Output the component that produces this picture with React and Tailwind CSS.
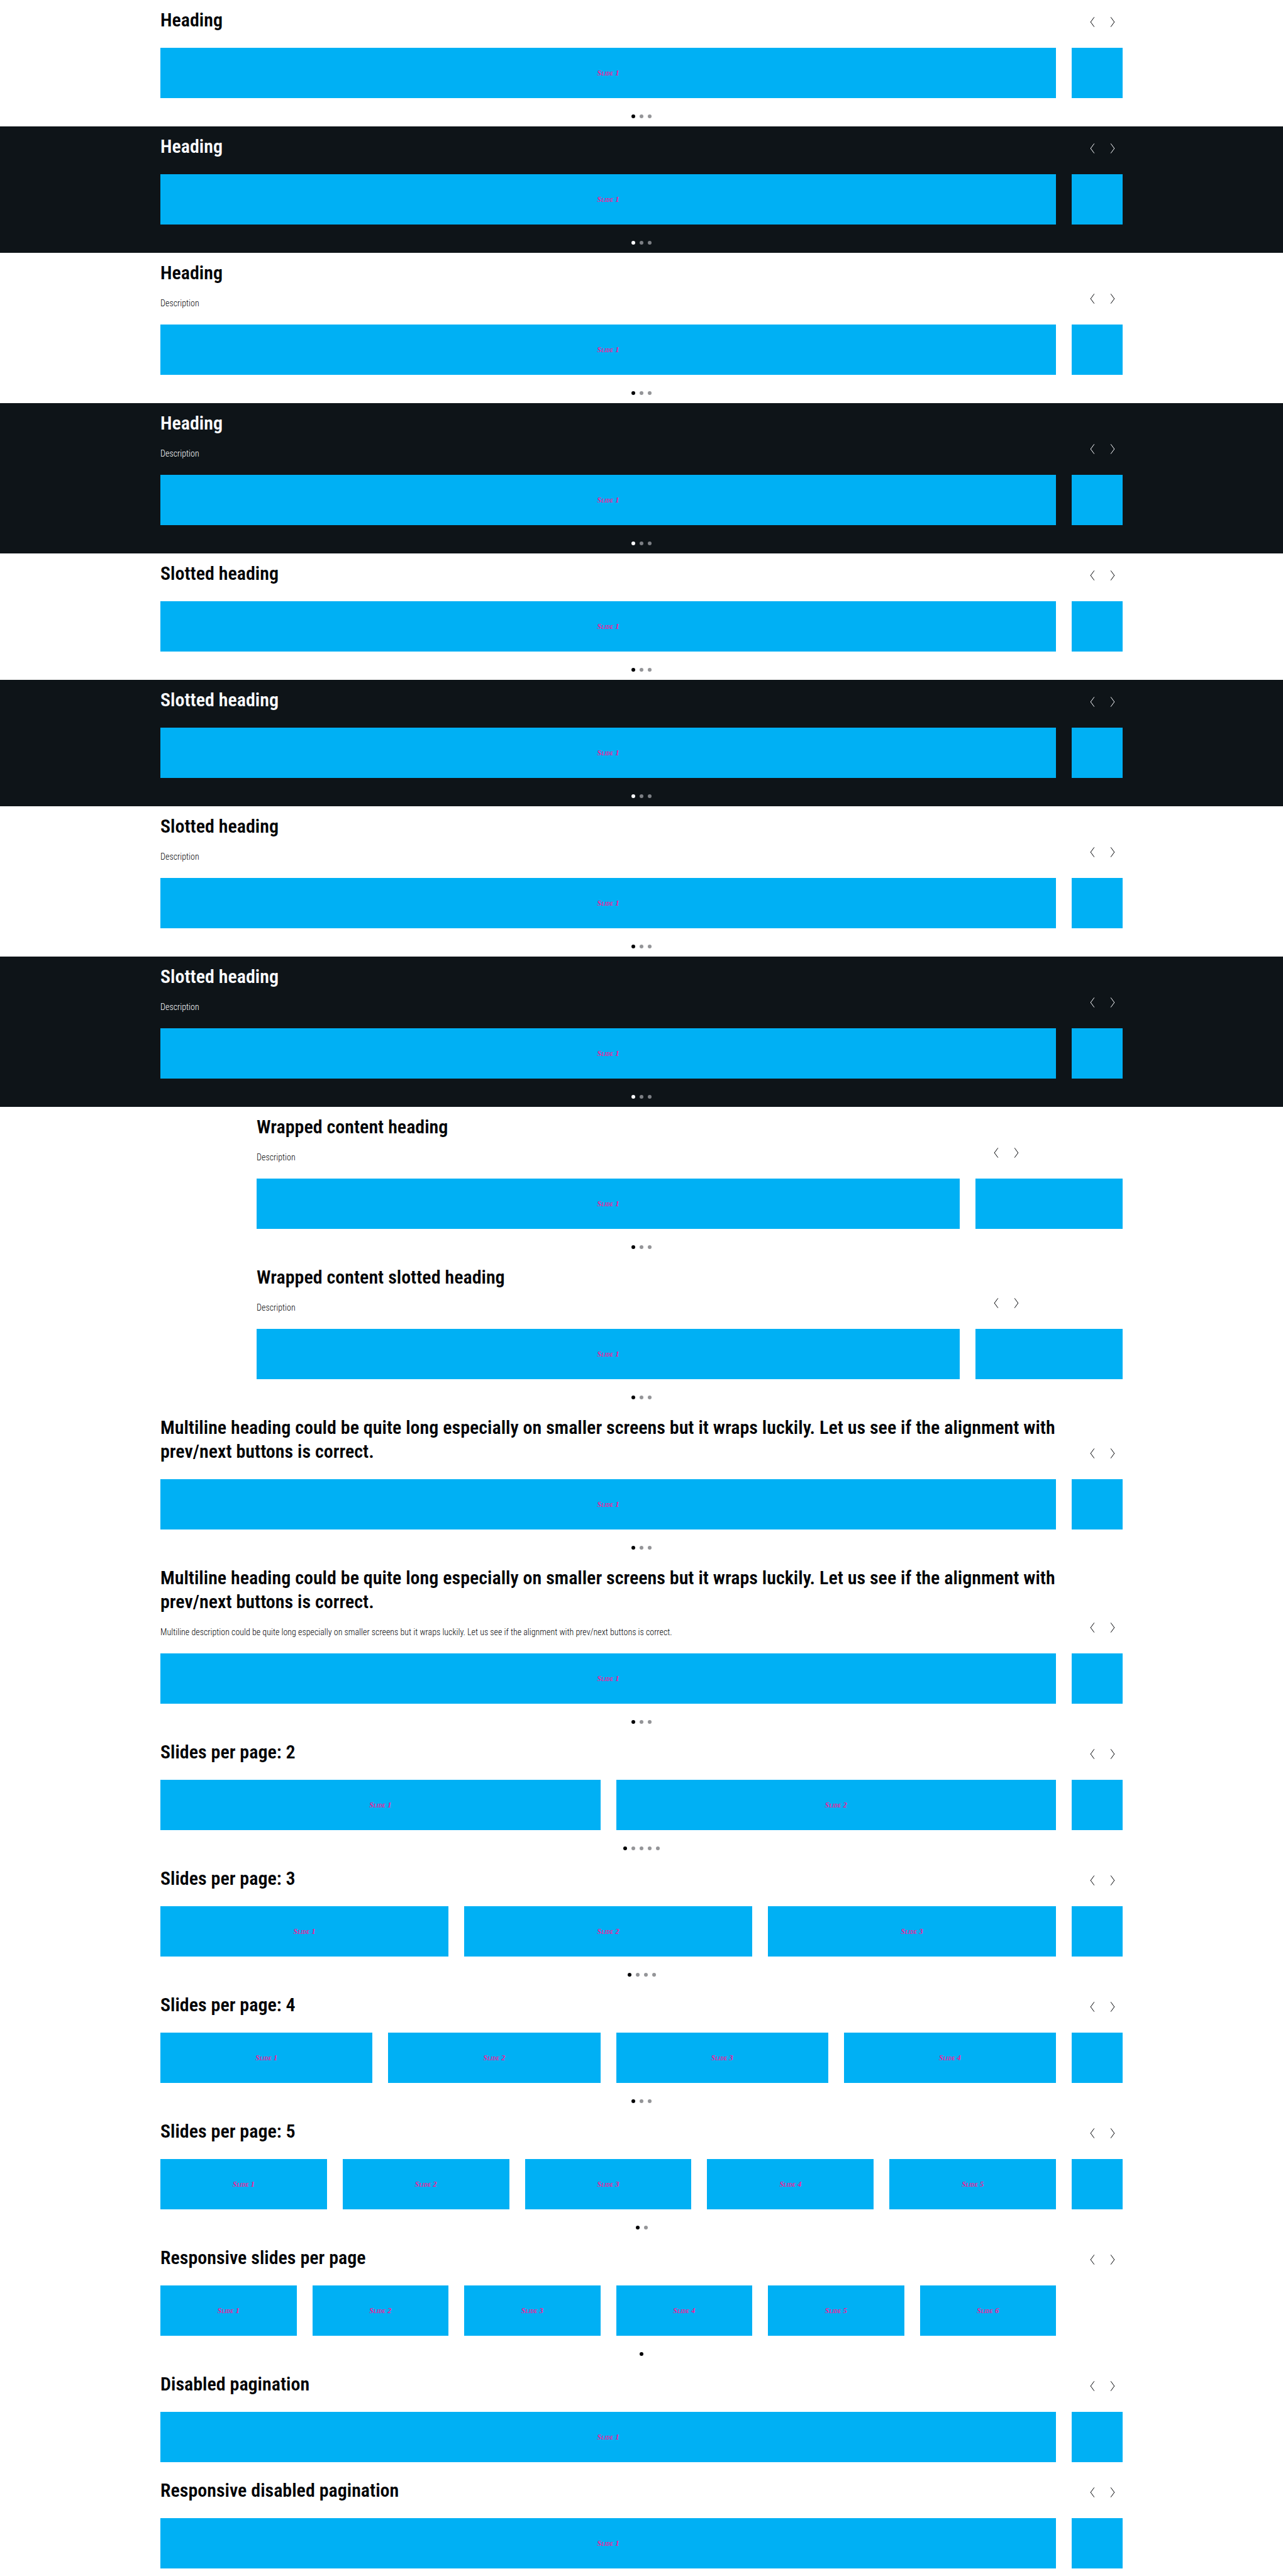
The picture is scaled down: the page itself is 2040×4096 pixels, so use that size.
const LONG_HEADING =
  "Multiline heading could be quite long especially on smaller screens but it wraps luckily. Let us see if the alignment with prev/next buttons is correct.";
const LONG_DESCRIPTION =
  "Multiline description could be quite long especially on smaller screens but it wraps luckily. Let us see if the alignment with prev/next buttons is correct.";

const CAROUSELS = [
  { heading: "Heading" },
  { heading: "Heading", dark: true },
  { heading: "Heading", description: "Description" },
  { heading: "Heading", description: "Description", dark: true },
  { heading: "Slotted heading" },
  { heading: "Slotted heading", dark: true },
  { heading: "Slotted heading", description: "Description" },
  { heading: "Slotted heading", description: "Description", dark: true },
  { heading: "Wrapped content heading", description: "Description", wrapped: true },
  { heading: "Wrapped content slotted heading", description: "Description", wrapped: true },
  { heading: LONG_HEADING },
  { heading: LONG_HEADING, description: LONG_DESCRIPTION },
  { heading: "Slides per page: 2", slides: 2, pages: 5 },
  { heading: "Slides per page: 3", slides: 3, pages: 4 },
  { heading: "Slides per page: 4", slides: 4, pages: 3 },
  { heading: "Slides per page: 5", slides: 5, pages: 2 },
  { heading: "Responsive slides per page", slides: 6, pages: 1 },
  { heading: "Disabled pagination", pages: 0 },
  { heading: "Responsive disabled pagination", pages: 0 },
];

function ArrowButton({ label, path }) {
  return (
    <button type="button" aria-label={label} className="flex size-8 items-center justify-center">
      <svg viewBox="0 0 24 24" className="size-5" fill="none" stroke="currentColor" strokeWidth="1.2" aria-hidden="true">
        <path d={path} />
      </svg>
    </button>
  );
}

function Carousel({ heading, description, dark, wrapped, slides = 1, pages = 3 }) {
  const hasPeek = pages !== 1;
  return (
    <section
      aria-label={heading}
      className={`py-[13px] last:pb-3 ${dark ? "bg-[#0e1418] text-[#fbfcff]" : "bg-white text-[#010205]"}`}
    >
      <div className={`flex items-end justify-between gap-4 ${wrapped ? "px-[20%]" : "px-[12.5%]"}`}>
        <div>
          <h2 className="text-[30px] leading-[38px] font-semibold">{heading}</h2>
          {description && <p className="mt-5 text-[14px] leading-[18px] font-light">{description}</p>}
        </div>
        <div className="flex shrink-0">
          <ArrowButton label="Previous" path="M15.4 2.8 L8.6 12 L15.4 21.2" />
          <ArrowButton label="Next" path="M8.6 2.8 L15.4 12 L8.6 21.2" />
        </div>
      </div>

      <div className={`mt-[25px] flex h-20 gap-[25px] pr-[12.5%] ${wrapped ? "pl-[20%]" : "pl-[12.5%]"}`}>
        {Array.from({ length: slides }, (_, i) => (
          <div
            key={i}
            className="flex flex-1 items-center justify-center bg-[#00b0f4] font-['Liberation_Serif',serif] text-[12px] leading-5 font-bold text-[#ff1493] italic [font-variant:small-caps]"
          >
            Slide {i + 1}
          </div>
        ))}
        <div className={`shrink-0 ${wrapped ? "w-[234px]" : "w-[81px]"} ${hasPeek ? "bg-[#00b0f4]" : ""}`} />
      </div>

      {pages > 0 && (
        <div className="mt-[26px] flex h-1.5 justify-center gap-[7px]">
          {Array.from({ length: pages }, (_, i) => (
            <span
              key={i}
              className={`size-1.5 rounded-full ${i === 0 ? "bg-current" : dark ? "bg-[#7c7f84]" : "bg-[#949598]"}`}
            />
          ))}
        </div>
      )}
    </section>
  );
}

export default function App() {
  return (
    <main className="font-['Roboto_Condensed','Liberation_Sans_Narrow','Arial_Narrow',Roboto,sans-serif]">
      {CAROUSELS.map((item, i) => (
        <Carousel key={i} {...item} />
      ))}
    </main>
  );
}
